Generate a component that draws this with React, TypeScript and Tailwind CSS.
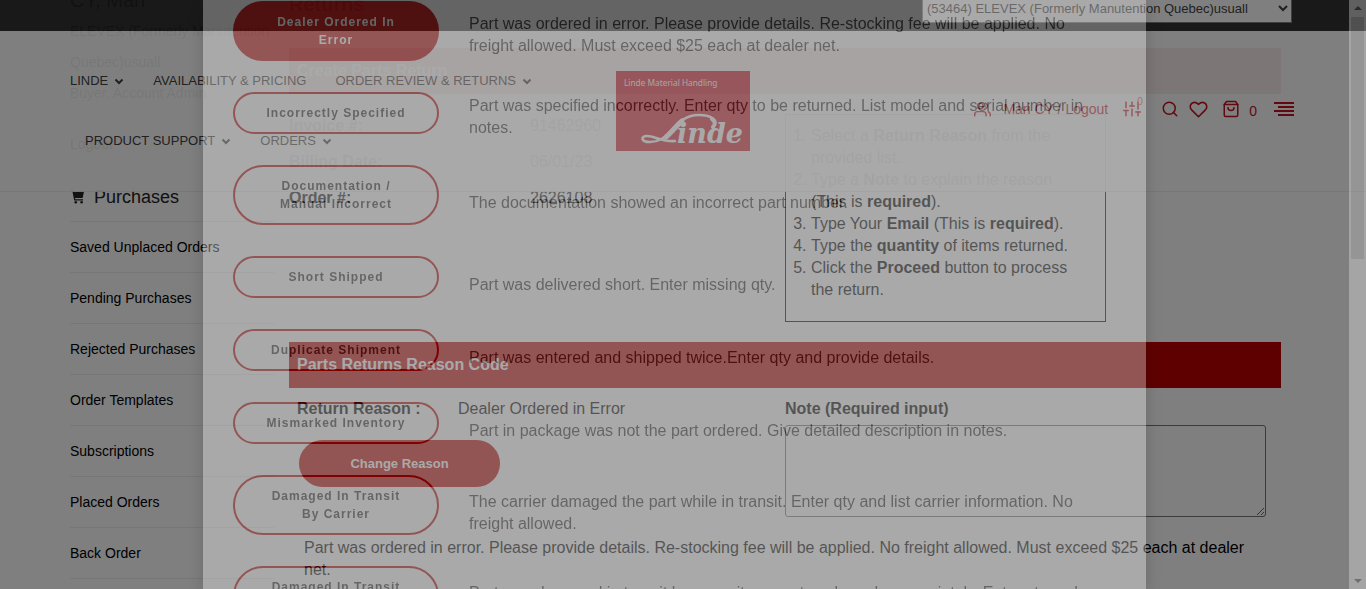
import React from 'react';
import { FiUsers, FiSearch, FiHeart, FiShoppingBag, FiSliders } from 'react-icons/fi';

const sideLinks = [
  'Saved Unplaced Orders',
  'Pending Purchases',
  'Rejected Purchases',
  'Order Templates',
  'Subscriptions',
  'Placed Orders',
  'Back Order',
];

type Reason = { id: string; lines: string[]; active?: boolean; text: string; pad: string };

const reasons: Reason[] = [
  { id: 'dealer', lines: ['Dealer Ordered In', 'Error'], active: true, pad: 'pt-2', text: 'Part was ordered in error. Please provide details. Re-stocking fee will be applied. No freight allowed. Must exceed $25 each at dealer net.' },
  { id: 'spec', lines: ['Incorrectly Specified'], pad: 'pt-2', text: 'Part was specified incorrectly. Enter qty to be returned. List model and serial number in notes.' },
  { id: 'doc', lines: ['Documentation /', 'Manual Incorrect'], pad: 'pt-4', text: 'The documentation showed an incorrect part number.' },
  { id: 'short', lines: ['Short Shipped'], pad: 'pt-4', text: 'Part was delivered short. Enter missing qty.' },
  { id: 'dup', lines: ['Duplicate Shipment'], pad: 'pt-4', text: 'Part was entered and shipped twice.Enter qty and provide details.' },
  { id: 'mis', lines: ['Mismarked Inventory'], pad: 'pt-4', text: 'Part in package was not the part ordered. Give detailed description in notes.' },
  { id: 'carrier', lines: ['Damaged In Transit', 'By Carrier'], pad: 'pt-4', text: 'The carrier damaged the part while in transit. Enter qty and list carrier information. No freight allowed.' },
  { id: 'pack', lines: ['Damaged In Transit', 'Packaging'], pad: 'pt-4', text: 'Part was damaged in transit however it was not packaged appropriately. Enter qty and provide details.' },
];

function Chevron() {
  return (
    <svg viewBox="0 0 10 7" className="h-[7px] w-2.5" fill="none" stroke="currentColor" strokeWidth="2">
      <path d="M1.5 1.5 5 5 8.5 1.5" />
    </svg>
  );
}

function NavLink({ children }: { children: React.ReactNode }) {
  return (
    <a href="#" className="flex items-center gap-1.5 whitespace-nowrap">
      {children}
    </a>
  );
}

function Sidebar() {
  return (
    <aside className="w-[204px] shrink-0 text-sm text-black">
      <h3 className="-mt-3 text-xl leading-6 text-[#222]">CY, Mari</h3>
      <p className="mt-1 text-sm leading-[31px] text-[#333]">ELEVEX (Formerly Manutention Quebec)usuall</p>
      <p className="leading-[31px] text-[#333]">Buyer, Account Admin</p>
      <a href="#" className="mt-5 block leading-[31px]">Logout</a>
      <h3 className="mt-5 flex h-[42px] items-center gap-2 border-b border-[#eee] pb-2 text-lg text-[#222]">
        <svg viewBox="0 0 16 14" className="h-3.5 w-4" fill="currentColor">
          <path d="M1 0H3.4L3.8 1.5H14L12.6 8H5L5.3 9.3H13V10.5H4.2L2.4 1.2H1Z" />
          <circle cx="5.8" cy="12.3" r="1.3" />
          <circle cx="11.6" cy="12.3" r="1.3" />
        </svg>
        Purchases
      </h3>
      <ul>
        {sideLinks.map((l) => (
          <li key={l} className="h-[51px] border-b border-[#eee] leading-[50px]">
            <a href="#">{l}</a>
          </li>
        ))}
      </ul>
    </aside>
  );
}

function Band({ children }: { children: React.ReactNode }) {
  return <h4 className="h-[46px] bg-[#be0000] px-2 text-base leading-[46px] font-bold text-white">{children}</h4>;
}

function Page() {
  return (
    <div className="flex gap-[15px] pr-[85px] pl-[70px]">
      <Sidebar />
      <main className="min-w-0 flex-1 text-base leading-[22px] text-black">
        <h2 className="-mt-2 mb-8 text-xl leading-6 font-bold text-[#be0000]">Returns</h2>
        <Band>Create Parts Return</Band>
        <div className="mt-5 flex">
          <dl className="grid w-[496px] grid-cols-[241px_1fr] content-start gap-y-3.5 pt-px text-[#222]">
            <dt className="font-bold">Invoice #:</dt>
            <dd>91462960</dd>
            <dt className="font-bold">Billing Date:</dt>
            <dd>06/01/23</dd>
            <dt className="font-bold">Order #:</dt>
            <dd>2626108</dd>
          </dl>
          <ol className="h-52 w-[321px] list-decimal border border-black py-2.5 pr-5 pl-[25px]">
            <li>Select a <b>Return Reason</b> from the provided list.</li>
            <li>Type a <b>Note</b> to explain the reason (This is <b>required</b>).</li>
            <li>Type Your <b>Email</b> (This is <b>required</b>).</li>
            <li>Type the <b>quantity</b> of items returned.</li>
            <li>Click the <b>Proceed</b> button to process the return.</li>
          </ol>
        </div>
        <div className="mt-5">
          <Band>Parts Returns Reason Code</Band>
        </div>
        <div className="mt-2.5 flex">
          <div className="w-[496px]">
            <div className="flex pl-2">
              <span className="w-[161px] font-bold">Return Reason :</span>
              <span>Dealer Ordered in Error</span>
            </div>
            <button className="mt-5 ml-2.5 h-[47px] w-[201px] rounded-full bg-[#be0000] text-[13px] font-bold text-white">
              Change Reason
            </button>
          </div>
          <div className="flex-1 pr-[15px]">
            <label htmlFor="note" className="block font-bold">Note (Required input)</label>
            <textarea id="note" className="mt-[5px] block h-[92px] w-full rounded-[3px] border border-[#767676] bg-white" />
          </div>
        </div>
        <p className="mt-5 px-[15px]">
          Part was ordered in error. Please provide details. Re-stocking fee will be applied. No freight allowed. Must exceed $25 each at dealer net.
        </p>
      </main>
    </div>
  );
}

function Header() {
  return (
    <header className="fixed inset-x-0 top-0 h-48 border-b border-[#eee] bg-white text-[#333] opacity-[0.93]">
      <div className="flex h-[31px] justify-end bg-[#242424] pr-[74px]">
        <select aria-label="Account" className="-mt-1.5 h-[29px] w-[370px] border border-[#767676] bg-white text-[13px] text-[#333]">
          <option>(53464) ELEVEX (Formerly Manutention Quebec)usuall</option>
        </select>
      </div>
      <div className="flex pr-[72px] pl-[70px]">
        <nav className="w-[546px] pt-10 text-[13px] leading-5">
          <div className="flex gap-[29px]">
            <NavLink>LINDE <Chevron /></NavLink>
            <NavLink>AVAILABILITY &amp; PRICING</NavLink>
            <NavLink>ORDER REVIEW &amp; RETURNS <Chevron /></NavLink>
          </div>
          <div className="mt-10 flex gap-[29px] pl-[15px]">
            <NavLink>PRODUCT SUPPORT <Chevron /></NavLink>
            <NavLink>ORDERS <Chevron /></NavLink>
          </div>
        </nav>
        <svg viewBox="0 0 134 80" className="mt-10 h-20 w-[134px] shrink-0" role="img" aria-label="Linde Material Handling">
          <rect width="134" height="80" fill="#cc0a18" />
          <text x="8" y="15" fontSize="8.3" fill="#fff" fontFamily="'Noto Sans', sans-serif">Linde Material Handling</text>
          <text x="61" y="72" fontSize="27" fontWeight="bold" fontStyle="italic" fill="#fff" fontFamily="'DejaVu Serif', serif">inde</text>
          <g fill="none" stroke="#fff" strokeLinecap="round">
            <path d="M97 56C103 50 96 44 83 44C69 44 62 52 55 60C50 66 42 71 34 71C25 71 24 65 31 65C39 65 46 71 59 70" strokeWidth="2.6" />
            <path d="M66 50C60 55 56 61 50 66" strokeWidth="5" />
            <path d="M97 56C100 53 99 50 96 48" strokeWidth="4" />
          </g>
        </svg>
        <div className="mt-[68px] ml-auto flex h-5 items-center text-sm text-[#be0010]">
          <FiUsers size={17} />
          <span className="ml-3 whitespace-nowrap"><a href="#">Mari CY</a> / <a href="#">Logout</a></span>
          <span className="relative ml-[15px]">
            <FiSliders size={18} />
            <sup className="absolute -top-1 left-3.5 text-[10px] leading-3 text-[#e0561c]">0</sup>
          </span>
          <FiSearch size={18} className="ml-5" />
          <FiHeart size={19} className="ml-2.5" />
          <FiShoppingBag size={18} className="ml-3.5" />
          <span className="ml-[9px] pt-1">0</span>
          <svg viewBox="0 0 20 15" className="ml-[17px] h-[15px] w-5" fill="currentColor" role="img" aria-label="Menu">
            <path d="M0 0H20V2H0ZM4 4H20V6H4ZM0 8H20V10H0ZM4 12H20V14H4Z" />
          </svg>
        </div>
      </div>
    </header>
  );
}

function Modal() {
  return (
    <div className="fixed inset-0 flex overflow-hidden opacity-[0.33]">
      <div role="dialog" aria-label="Return reasons" className="mr-[220px] ml-[203px] h-full flex-1 bg-white shadow-[0_5px_15px_rgba(0,0,0,0.5)]">
        <div className="flex flex-col gap-[31px] pt-px pr-[45px] pl-[30px] text-[#333]">
          {reasons.map((r) => (
            <div key={r.id} className="flex items-center gap-[30px]">
              <button
                className={
                  'w-[206px] shrink-0 rounded-[30px] border-2 border-[#be0000] py-2.5 text-xs leading-[18px] font-bold tracking-[1px] ' +
                  (r.active ? 'bg-[#be0000] text-white' : 'text-[#333]')
                }
              >
                {r.lines.map((l) => (
                  <span key={l} className="block">{l}</span>
                ))}
              </button>
              <p className={'-my-4 flex-1 text-base leading-[22px] ' + r.pad}>{r.text}</p>
            </div>
          ))}
        </div>
      </div>
      <div className="absolute inset-y-0 right-0 flex w-[17px] flex-col items-center justify-between bg-[#f1f1f1] py-1.5">
        <svg viewBox="0 0 8 4" className="h-1 w-2" fill="#505050"><path d="M0 4 4 0 8 4Z" /></svg>
        <div className="absolute inset-x-0.5 top-[17px] h-[242px] bg-[#c1c1c1]" />
        <svg viewBox="0 0 8 4" className="h-1 w-2" fill="#505050"><path d="M0 0H8L4 4Z" /></svg>
      </div>
    </div>
  );
}

export default function App() {
  return (
    <div className="h-screen overflow-hidden bg-white font-['Liberation_Sans',Arial,sans-serif]">
      <Page />
      <Header />
      <div className="fixed inset-0 bg-black/50" />
      <Modal />
    </div>
  );
}
